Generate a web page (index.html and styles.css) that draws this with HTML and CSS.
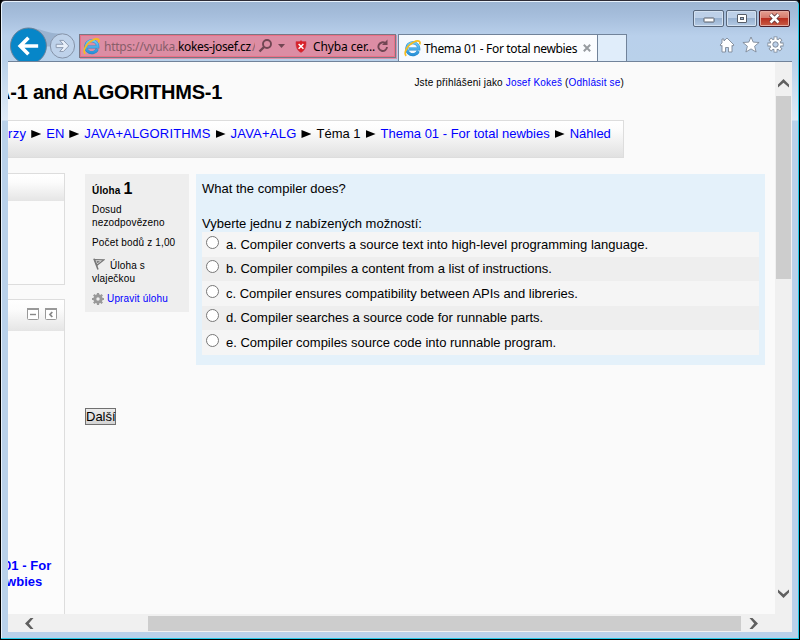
FILE: index.html
```html
<!DOCTYPE html>
<html lang="cs">
<head>
<meta charset="utf-8">
<title>Thema 01 - For total newbies</title>
<link rel="stylesheet" href="styles.css">
</head>
<body>
<svg width="0" height="0" class="defs">
  <defs>
    <linearGradient id="blue" x1="0" y1="0" x2="0" y2="1"><stop offset="0" stop-color="#6cc9f5"/><stop offset="1" stop-color="#2b93da"/></linearGradient>
    <symbol id="ie" viewBox="0 0 17 17">
      <path d="M14.300 11.200A6 6 0 1 1 14.800 8.900H5" fill="none" stroke="#2387c9" stroke-width="3"/>
      <path d="M14.100 11.200A5.900 5.900 0 1 1 14.700 8.900H5" fill="none" stroke="url(#blue)" stroke-width="2.200"/>
      <path d="M2.200 15.800C-.8 13 3.500 5 9.500 2.200 14-.1 17.200 1 15.600 4.400" fill="none" stroke="#f5bd20" stroke-width="1.700"/>
    </symbol>
  </defs>
</svg>
<div class="window">
  <header class="chrome">
    <div class="titlebar">
      <span class="win-btn"><svg width="12" height="6" viewBox="0 0 12 6"><rect x="1" y="1" width="10" height="4" rx=".5" fill="#fff" stroke="#565d68"/></svg></span>
      <span class="win-btn"><svg width="12" height="10" viewBox="0 0 12 10"><rect x="1.500" y=".5" width="9" height="8" rx=".5" fill="#fff" stroke="#565d68"/><rect x="4.500" y="3.500" width="3" height="2" fill="#9fb8d5" stroke="#565d68"/></svg></span>
      <span class="win-btn close"><svg width="13" height="11" viewBox="0 0 13 11"><path d="M2.500 1.500l8 8m0-8l-8 8" stroke="#5d3438" stroke-width="4.200"/><path d="M2.500 1.500l8 8m0-8l-8 8" stroke="#fff" stroke-width="2.500"/></svg></span>
    </div>
    <div class="toolbar">
      <svg class="nav" width="70" height="35" viewBox="0 0 70 35">
        <path d="M19 1C32 1 38 7 54 7L50 20H34z" fill="#9bb3d0"/>
        <circle cx="54" cy="19.500" r="12.500" fill="#bed2ea" stroke="#8391a5"/>
        <path d="M47.500 17.800h7.200l-3.500-4h3.800l5.500 5.700-5.500 5.700h-3.800l3.500-4h-7.200z" fill="#e8f0fa" stroke="#8492a8" stroke-width=".9"/>
        <circle cx="19" cy="19.500" r="18.500" fill="#0786c8" stroke="#6b8198"/>
        <path d="M29 19.500H11.500M19 11l-8.500 8.500L19 28" fill="none" stroke="#fff" stroke-width="3.700"/>
      </svg>
      <div class="address">
        <svg class="ie" width="17" height="17"><use href="#ie"/></svg>
        <span class="url"><span class="scheme">https://vyuka.</span><span class="host">kokes-josef.cz</span><span class="slash">/</span></span>
        <svg class="search" width="15" height="14" viewBox="0 0 15 14"><circle cx="9" cy="5" r="4" fill="none" stroke="#714653" stroke-width="1.900"/><path d="M6 8l-4.500 4.500" stroke="#714653" stroke-width="2.400"/></svg>
        <svg class="caret" width="7" height="4" viewBox="0 0 7 4"><path d="M0 0h7L3.500 4z" fill="#714653"/></svg>
        <svg class="shield" width="12" height="13" viewBox="0 0 12 13"><path d="M6 .5l1.500 1H11c.5 5-1 9-5 11C2 10.500.5 6.500 1 1.500h3.500z" fill="#d92129" stroke="#c64355" stroke-width=".5"/><path d="M3.600 4l4.800 4.800m0-4.800L3.600 8.800" stroke="#fff" stroke-width="1.500"/></svg>
        <span class="cert">Chyba cer...</span>
        <svg class="reload" width="12" height="14" viewBox="0 0 12 14"><path d="M8.300 4.200A4.300 4.300 0 1 0 10 8" fill="none" stroke="#714653" stroke-width="1.900"/><path d="M10.500 .5v5.500H5z" fill="#714653"/></svg>
      </div>
      <div class="tab"><svg class="ie" width="17" height="17"><use href="#ie"/></svg><span class="tab-title">Thema 01 - For total newbies</span><svg class="x" width="8" height="8" viewBox="0 0 8 8"><path d="M.8.800l6.400 6.400m0-6.400L.8 7.200" stroke="#979ba0" stroke-width="2"/></svg></div>
      <div class="new-tab"></div>
      <div class="tools">
        <svg width="16" height="16" viewBox="0 0 16 16"><path d="M8 1l7 7-1 1.200-1-.9V15H9.500v-4.500h-3V15H3V8.300l-1 .9L1 8l2-2V2h2v2z" fill="#fff" stroke="#7e8998" stroke-width=".9"/></svg>
        <svg width="18" height="17" viewBox="0 0 18 17"><path d="M9 1l2.200 5.100 5.900.400-4.500 3.700 1.500 5.800L9 12.900 3.900 16l1.500-5.800L.9 6.500l5.900-.4z" fill="#fff" stroke="#7e8998" stroke-width=".9"/></svg>
        <svg width="17" height="17" viewBox="-8.500 -8.500 17 17"><path d="M0-8V8M-8 0H8M-5.600-5.600L5.600 5.600M5.600-5.600L-5.600 5.600" stroke="#7e8998" stroke-width="3.800"/><circle r="5.900" fill="#7e8998"/><path d="M0-7.300V7.300M-7.300 0H7.300M-5.100-5.100L5.100 5.100M5.100-5.100L-5.100 5.100" stroke="#fff" stroke-width="2.200"/><circle r="5.100" fill="#fff"/><circle r="2.700" fill="#bcd0e9" stroke="#7e8998"/></svg>
      </div>
    </div>
  </header>
  <div class="viewport">
    <main class="page">
      <div class="page-head">
        <h1>A-1 and ALGORITHMS-1</h1>
        <p class="login">Jste přihlášeni jako <a>Josef Kokeš</a> (<a>Odhlásit se</a>)</p>
      </div>
      <nav class="crumbs"><a class="c1">rzy</a><i></i><a>EN</a><i></i><a class="c3">JAVA+ALGORITHMS</a><i></i><a class="c4">JAVA+ALG</a><i></i><span>Téma 1</span><i></i><a>Thema 01 - For total newbies</a><i></i><a>Náhled</a></nav>
      <div class="columns">
        <aside class="side">
          <section class="block first"><div class="block-head"></div></section>
          <section class="block second">
            <div class="block-head">
              <svg width="12" height="12" viewBox="0 0 12 12"><rect x=".5" y=".5" width="11" height="11" rx="1" fill="#fff" stroke="#999"/><path d="M0 1h12" stroke="#999" stroke-width="2"/><path d="M3 6.500h6" stroke="#888" stroke-width="1.400"/></svg>
              <svg width="12" height="12" viewBox="0 0 12 12"><rect x=".5" y=".5" width="11" height="11" rx="1" fill="#fff" stroke="#999"/><path d="M0 1h12" stroke="#999" stroke-width="2"/><path d="M7.300 4L5 6.500 7.300 9" fill="none" stroke="#888" stroke-width="1.800"/></svg>
            </div>
            <p class="side-link"><a>01 - For<br><span>wbies</span></a></p>
          </section>
        </aside>
        <div class="quiz">
          <div class="question">
            <div class="info">
              <h2>Úloha <b>1</b></h2>
              <p class="state">Dosud<br>nezodpovězeno</p>
              <p class="grade">Počet bodů z 1,00</p>
              <p class="flag"><svg width="12" height="12" viewBox="0 0 12 12"><path d="M1 .8l4 10.700" stroke="#777" stroke-width="1.600"/><path d="M1.500 1.500l9.500.3-7 5.500z" fill="#ddd" stroke="#777" stroke-width="1.200"/><path d="M3.500 3l3.500.2-2.500 2z" fill="#777"/></svg>Úloha s<br>vlaječkou</p>
              <p class="edit"><svg width="12" height="12" viewBox="0 0 12 12"><circle cx="6" cy="6" r="3.200" fill="none" stroke="#999" stroke-width="3"/><path d="M6 0v12M0 6h12M1.800 1.800l8.400 8.400m0-8.400l-8.400 8.400" stroke="#999" stroke-width="2.200"/><circle cx="6" cy="6" r="1.700" fill="#eee"/></svg><a>Upravit úlohu</a></p>
            </div>
            <div class="content">
              <p class="qtext">What the compiler does?</p>
              <p class="prompt">Vyberte jednu z nabízených možností:</p>
              <div class="answers">
                <div class="answer"><span class="radio"></span><span>a. Compiler converts a source text into high-level programming language.</span></div>
                <div class="answer"><span class="radio"></span><span>b. Compiler compiles a content from a list of instructions.</span></div>
                <div class="answer"><span class="radio"></span><span>c. Compiler ensures compatibility between APIs and libreries.</span></div>
                <div class="answer"><span class="radio"></span><span>d. Compiler searches a source code for runnable parts.</span></div>
                <div class="answer"><span class="radio"></span><span>e. Compiler compiles source code into runnable program.</span></div>
              </div>
            </div>
          </div>
          <button class="next">Další</button>
        </div>
      </div>
    </main>
    <div class="vscroll">
      <svg width="11" height="9" viewBox="0 0 11 9"><path d="M0 8.500V5.500L5.500 0 11 5.500v3L5.500 3.800z" fill="#606060"/></svg>
      <div class="vthumb"></div>
      <svg width="11" height="9" viewBox="0 0 11 9"><path d="M0 .5v3L5.500 9 11 3.500v-3L5.500 5.200z" fill="#606060"/></svg>
    </div>
    <div class="hscroll">
      <svg width="9" height="11" viewBox="0 0 9 11"><path d="M8.500 0h-3L0 5.500 5.500 11h3L3.800 5.500z" fill="#606060"/></svg>
      <div class="hthumb"></div>
      <svg width="9" height="11" viewBox="0 0 9 11"><path d="M.5 0h3L9 5.500 3.500 11h-3L5.200 5.500z" fill="#606060"/></svg>
    </div>
  </div>
</div>
</body>
</html>
```

FILE: styles.css
```css
* { box-sizing: border-box; }
html, body { margin: 0; height: 640px; overflow: hidden; background: #000; }
p, h1, h2 { margin: 0; }
svg { display: block; flex: none; }
.defs { position: absolute; }
a { color: #0000ff; text-decoration: none; }
.window {
  width: 800px; height: 640px; padding: 0 6px 6px 7px;
  border: 1px solid #000; border-top: 1px solid #2d2c36;
  border-radius: 5px 5px 0 0;
  background: linear-gradient(#9cb5d2 0, #a6bedc 15px, #b9d0eb 35px, #b9d1ea 60px, #d9e6f4 108px, #dfeaf6 119px, #b9d1ea 120px);
  box-shadow: inset -1px -1px #23c9e7, inset 1px 1px #e8f2fc;
}
.chrome { width: 784px; height: 61px; border-bottom: 1px solid #71839a; font-family: "Noto Sans", sans-serif; font-size: 12px; }
.titlebar { display: flex; justify-content: flex-end; gap: 2px; height: 33px; padding: 9px 2px 0 0; }
.win-btn {
  display: flex; align-items: center; justify-content: center; width: 31px; height: 17px;
  border: 1px solid #58677c; border-radius: 2px; box-shadow: inset 0 0 0 1px #d3e1f1;
  background: linear-gradient(#bdd0e8 0 48%, #98b2d1 50%, #b4cae4);
}
.win-btn:first-child { padding-top: 3px; }
.close { border-color: #4d1b25; background: linear-gradient(#e5a092 0, #d5796b 48%, #b92f20 50%, #c85c45); box-shadow: inset 0 0 0 1px #e4aaa0; }
.toolbar { display: flex; height: 27px; align-items: flex-start; }
.nav { margin: -7px 0 0 1px; height: 34px; }
.address {
  display: flex; align-items: center; width: 317px; height: 24px;
  border: 1px solid #7a7785; background: #dc8da4; box-shadow: inset 0 0 0 1px #ea7086, 1px 1px #d993ab;
  white-space: nowrap;
}
.address .ie { margin-left: 3px; }
.url { display: flex; width: 151px; margin-left: 4px; overflow: hidden; line-height: 20px; padding-top: 1px; }
.scheme { color: #885e6a; width: 74px; letter-spacing: -.02em; flex: none; }
.host { width: 74px; flex: none; letter-spacing: -.03em; color: #000; }
.slash { color: #885e6a; }
.search { margin-left: 3px; margin-top: -1px; }
.caret { margin-left: 5px; }
.shield { margin-left: 10px; }
.cert { margin-left: 6px; width: 64px; letter-spacing: -.01em; }
.tab {
  display: flex; align-items: center; width: 200px; height: 27px; margin-left: 2px; padding: 0 5px;
  border: 1px solid #71839a; border-bottom: 0; background: linear-gradient(90deg, #f5f9fe, #fff 50%, #fafcff); white-space: nowrap;
}
.tab-title { width: 155px; margin-left: 3px; letter-spacing: -.028em; padding-top: 1px; }
.tab .x { margin-left: 4px; }
.new-tab { width: 30px; height: 27px; margin-left: -1px; border: 1px solid #71839a; border-bottom: 0; background: #e0edfa; }
.tools { display: flex; align-items: center; gap: 7px; margin: 2px 0 0 92px; }
.viewport { display: grid; grid-template-columns: 767px 17px; grid-template-rows: 552px 18px; width: 784px; }
.page { overflow: hidden; background: #fafafa; font-family: "Liberation Sans", Arial, sans-serif; font-size: 13px; color: #000; }
.page-head { display: flex; justify-content: space-between; height: 58px; width: 616px; white-space: nowrap; }
h1 { margin: 18px 0 0 -11px; font-size: 20px; line-height: 24px; letter-spacing: -.21px; text-indent: -1px; }
.login { margin-top: 14px; font-size: 10px; line-height: 14px; letter-spacing: .17px; }
.crumbs {
  display: flex; height: 38px; width: 616px; padding: 4px 0 0; border: 1px solid #ddd; border-left: 0;
  background: linear-gradient(#fff, #fcfcfc 25%, #e1e1e1); line-height: 17px; white-space: nowrap;
}
.crumbs i { width: 10px; height: 8px; margin: 5px 5px 0; background: #000; clip-path: polygon(0 0, 100% 50%, 0 100%); }
.c1 { letter-spacing: .3px; }
.c3 { letter-spacing: .14px; }
.c4 { letter-spacing: .22px; }
.columns { display: flex; padding-top: 15px; }
.side { width: 57px; flex: none; }
.block { border: 1px solid #ddd; border-left: 0; background: #fcfcfc; }
.block-head { display: flex; justify-content: flex-end; gap: 6px; padding: 8px 7px 0 0; height: 27px; background: linear-gradient(#fff, #fcfcfc 30%, #e5e5e5); }
.first { height: 112px; }
.second { height: 340px; margin-top: 14px; }
.second .block-head { height: 31px; }
.side-link { margin: 227px 0 0 -4px; font-weight: bold; line-height: 16px; white-space: nowrap; letter-spacing: .05px; }
.side-link span { margin-left: 2px; }
.quiz { width: 680px; margin: 1px 0 0 20px; }
.question { display: flex; gap: 7px; align-items: flex-start; }
.info { width: 104px; height: 138px; padding: 6px 0 0 7px; background: #eee; font-size: 10px; line-height: 13px; white-space: nowrap; letter-spacing: .16px; }
.info h2 { font-size: 10px; line-height: 17px; }
.info h2 b { font-size: 16px; }
.state { margin-top: 4px; }
.grade { margin-top: 7px; }
.flag { margin-top: 10px; }
.flag svg { display: inline-block; margin: -1px 5px 0 1px; vertical-align: top; }
.edit { display: flex; align-items: center; gap: 3px; margin-top: 7px; }
.content { width: 569px; height: 191px; padding: 6px 6px 0; background: #e4f1fa; line-height: 17px; white-space: nowrap; }
.prompt { margin-top: 18px; }
.answer { display: flex; height: 24.500px; background: #f5f5f5; line-height: 25px; }
.answer:nth-child(even) { background: #eee; line-height: 24px; }
.radio { width: 13px; height: 13px; margin: 4px 7px 0 4px; border: 1px solid #777; border-radius: 50%; background: #fff; }
.answer:nth-child(even) .radio { margin-top: 3px; }
.next {
  display: block; margin-top: 43px; width: 31px; height: 17px; padding: 0; border: 1px solid #707070;
  background: linear-gradient(#ececec, #d4d4d4); font: 13px/15px "Liberation Sans", Arial, sans-serif; color: #000;
}
.vscroll { display: flex; flex-direction: column; align-items: center; background: #f0f0f0; padding-top: 17px; }
.vthumb { width: 15px; height: 183px; margin: 8px 0 310px; background: #cdcdcd; }
.hscroll { grid-column: 1 / 3; display: flex; align-items: center; background: #f0f0f0; padding-left: 17px; }
.hthumb { height: 15px; width: 593px; margin: 0 8px 0 114px; background: #cdcdcd; }
```
